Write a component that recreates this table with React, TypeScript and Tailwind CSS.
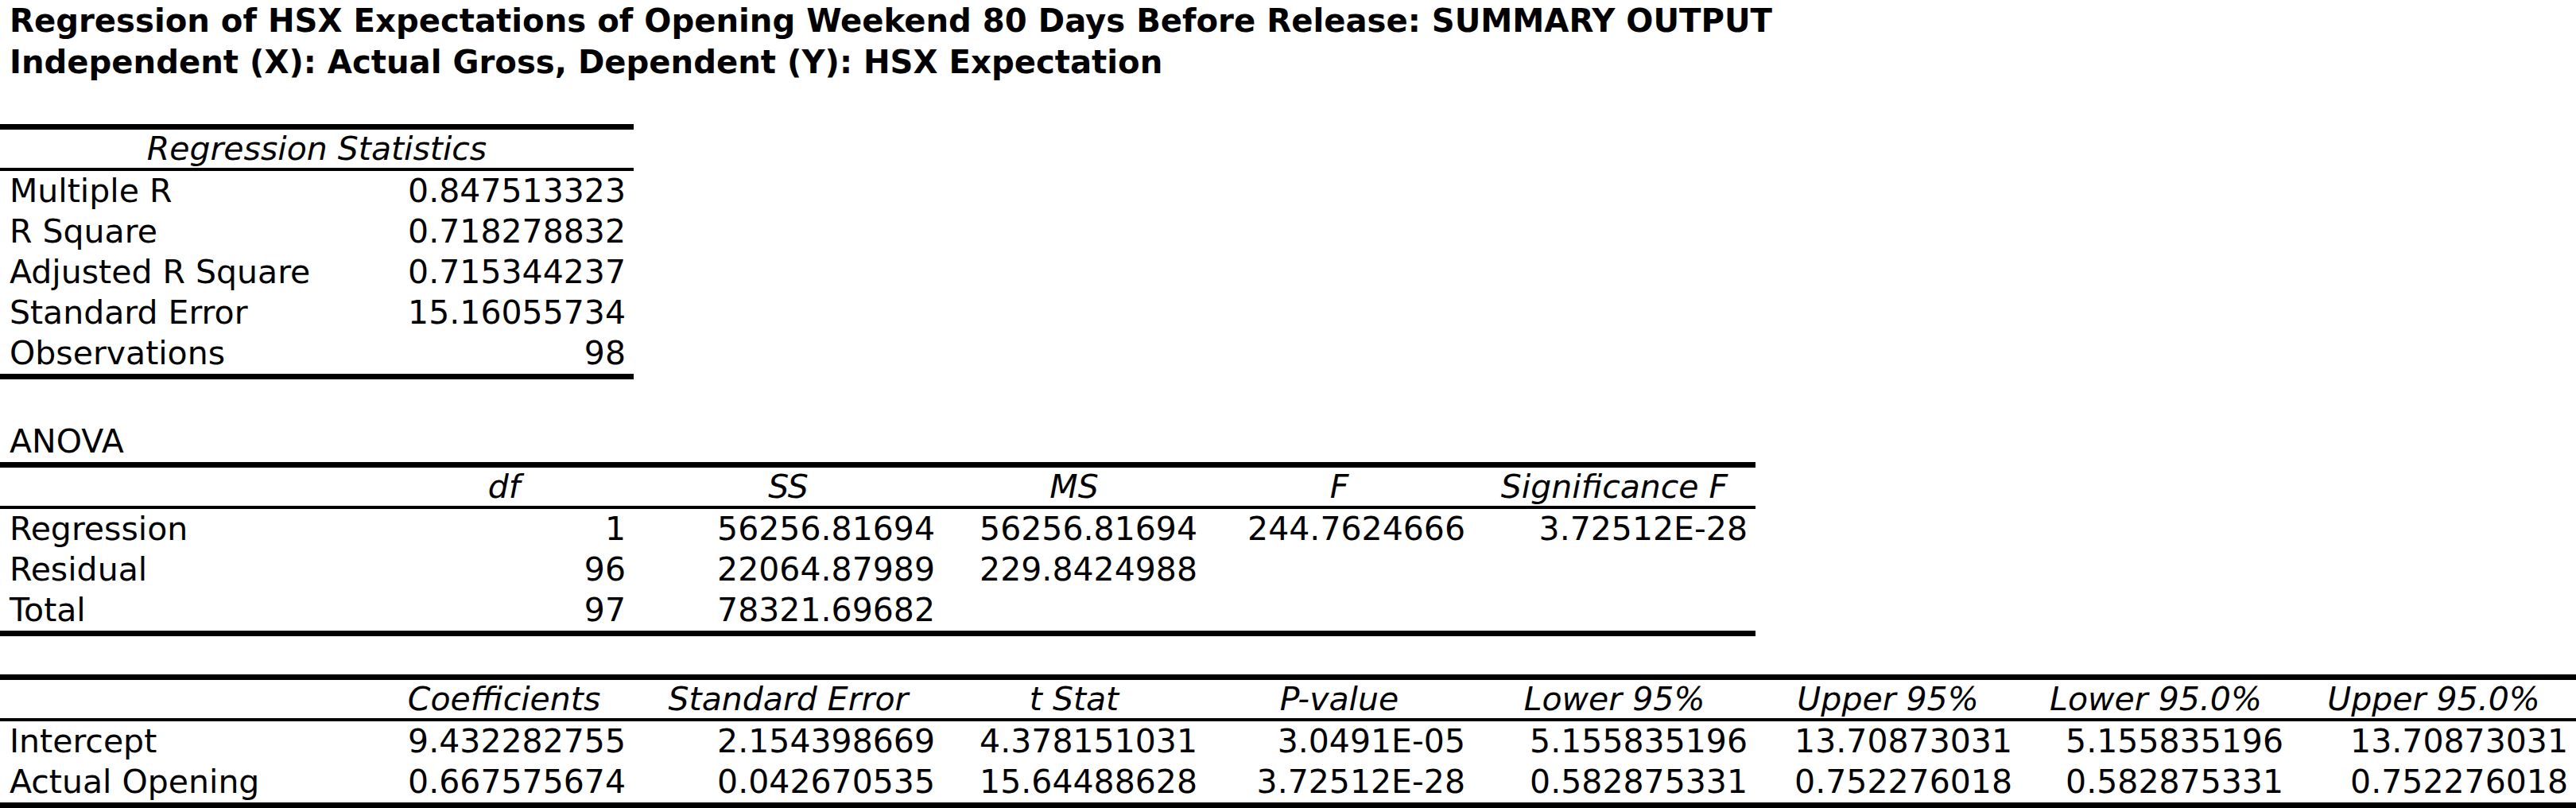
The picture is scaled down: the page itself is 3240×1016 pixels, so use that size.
import React from 'react';

// column grid shared by the three tables (Excel-style sheet)
const GRID9 = 'grid grid-cols-[471px_326px_389px_330px_337px_355px_333px_341px_358px]';
const GRID6 = 'grid grid-cols-[471px_326px_389px_330px_337px_355px]';

const statRows: [string, string][] = [
  ['Multiple R', '0.847513323'],
  ['R Square', '0.718278832'],
  ['Adjusted R Square', '0.715344237'],
  ['Standard Error', '15.16055734'],
  ['Observations', '98'],
];

const anovaHead = ['', 'df', 'SS', 'MS', 'F', 'Significance F'];
const anovaRows: string[][] = [
  ['Regression', '1', '56256.81694', '56256.81694', '244.7624666', '3.72512E-28'],
  ['Residual', '96', '22064.87989', '229.8424988', '', ''],
  ['Total', '97', '78321.69682', '', '', ''],
];

const coefHead = ['', 'Coefficients', 'Standard Error', 't Stat', 'P-value', 'Lower 95%', 'Upper 95%', 'Lower 95.0%', 'Upper 95.0%'];
const coefRows: string[][] = [
  ['Intercept', '9.432282755', '2.154398669', '4.378151031', '3.0491E-05', '5.155835196', '13.70873031', '5.155835196', '13.70873031'],
  ['Actual Opening', '0.667575674', '0.042670535', '15.64488628', '3.72512E-28', '0.582875331', '0.752276018', '0.582875331', '0.752276018'],
];

const HeadRow = ({ cells, grid }: { cells: string[]; grid: string }) => (
  <div className={`${grid} h-[52px] border-b-[4px] border-black leading-[48px] italic`}>
    {cells.map((c, i) => (
      <div key={i} className="text-center whitespace-nowrap">{c}</div>
    ))}
  </div>
);

const DataRow = ({ cells, grid }: { cells: string[]; grid: string }) => (
  <div className={`${grid} h-[51px] leading-[50px]`}>
    {cells.map((c, i) =>
      i === 0 ? (
        <div key={i} className="pl-[12px] whitespace-nowrap">{c}</div>
      ) : (
        <div key={i} className="pr-[10px] text-right whitespace-nowrap">{c}</div>
      )
    )}
  </div>
);

export default function App() {
  return (
    <div className="w-[3240px] h-[1016px] overflow-hidden bg-white text-black text-[41px] [font-family:'DejaVu_Sans',Verdana,sans-serif]">
      {/* Title */}
      <div className="pl-[12px] text-[40.2px] font-bold leading-[52px] whitespace-nowrap">
        <div>Regression of HSX Expectations of Opening Weekend 80 Days Before Release: SUMMARY OUTPUT</div>
        <div>Independent (X): Actual Gross, Dependent (Y): HSX Expectation</div>
      </div>

      {/* Regression Statistics */}
      <div className="mt-[52px] w-[797px] border-y-[7px] border-black">
        <div className="h-[52px] border-b-[4px] border-black leading-[48px] italic text-center">Regression Statistics</div>
        {statRows.map(([label, value]) => (
          <DataRow key={label} cells={[label, value]} grid="grid grid-cols-[471px_326px]" />
        ))}
      </div>

      {/* ANOVA */}
      <div className="mt-[52px] h-[52px] pl-[12px] leading-[52px]">ANOVA</div>
      <div className="w-[2208px] border-y-[7px] border-black">
        <HeadRow cells={anovaHead} grid={GRID6} />
        {anovaRows.map((r) => (
          <DataRow key={r[0]} cells={r} grid={GRID6} />
        ))}
      </div>

      {/* Coefficients */}
      <div className="mt-[48px] w-[3240px] border-y-[7px] border-black">
        <HeadRow cells={coefHead} grid={GRID9} />
        {coefRows.map((r) => (
          <DataRow key={r[0]} cells={r} grid={GRID9} />
        ))}
      </div>
    </div>
  );
}
